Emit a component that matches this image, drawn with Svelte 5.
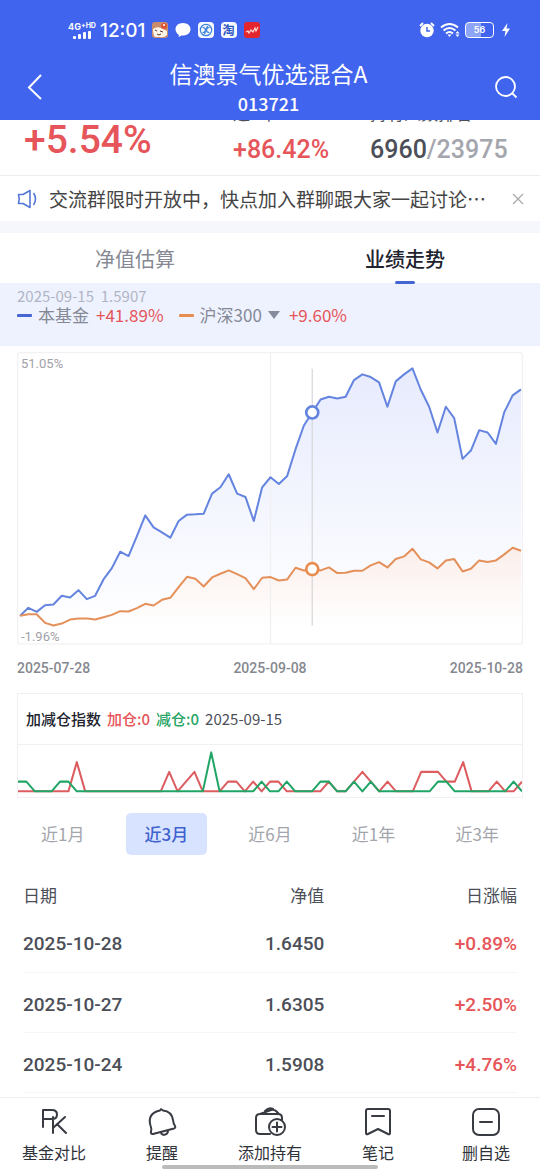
<script>
    const fundLine = [
        827, 803, 815, 795, 793, 767, 772, 750, 777, 767, 718, 684, 635, 648, 588, 526, 562, 577, 593, 543,
        524, 523, 521, 461, 442, 403, 461, 471, 543, 442, 412, 432, 408, 328, 257, 218, 179, 171, 176, 171,
        121, 104, 112, 128, 201, 125, 104, 86, 150, 201, 278, 201, 235, 357, 332, 271, 278, 312, 217, 167, 149
    ];
    const indexLine = [
        827, 822, 822, 848, 856, 850, 838, 835, 835, 838, 831, 824, 813, 814, 804, 791, 796, 779, 773, 741,
        710, 716, 739, 712, 701, 691, 702, 714, 747, 713, 711, 721, 718, 683, 691, 687, 691, 682, 699, 698,
        692, 692, 676, 666, 682, 657, 649, 626, 658, 667, 685, 661, 657, 694, 686, 661, 666, 661, 643, 623, 632
    ];
    const selected = 35;

    const buyLevels = [
        0, 0, 0, 0, 0, 0, 0, 3, 0, 0, 0, 0, 0, 0, 0, 0, 0, 0, 2, 0, 1, 2, 0, 0, 0, 1, 1, 0, 1, 0, 1,
        1, 0, 0, 0, 0, 0, 1, 0, 0, 1, 2, 1, 0, 1, 0, 0, 0, 2, 2, 2, 1, 1, 3, 0, 0, 0, 1, 0, 0, 1
    ];
    const sellLevels = [
        1, 1, 0, 0, 0, 1, 1, 0, 0, 0, 0, 0, 0, 0, 0, 0, 0, 0, 0, 0, 0, 0, 0, 4, 0, 0, 0, 0, 0, 1, 0,
        0, 1, 0, 0, 0, 1, 1, 0, 0, 1, 0, 1, 0, 0, 0, 0, 0, 0, 0, 1, 1, 0, 0, 0, 0, 0, 0, 0, 1, 0
    ];

    const px = (i) => 9 + i * 25;
    const py = (v) => v - 37;
    const points = (line) => line.map((v, i) => `${px(i)},${py(v)}`).join(' ');
    const area = (line) => `${px(0)},819 ${points(line)} ${px(60)},819`;
    const levels = (list) => list.map((v, i) => `${i * 25},${138 - v * 29}`).join(' ');

    const periods = ['近1月', '近3月', '近6月', '近1年', '近3年'];
    let period = '近3月';

    const rows = [
        { date: '2025-10-28', value: '1.6450', change: '+0.89%' },
        { date: '2025-10-27', value: '1.6305', change: '+2.50%' },
        { date: '2025-10-24', value: '1.5908', change: '+4.76%' }
    ];
</script>

<div class="page">
    <header>
        <div class="status">
            <div class="network">
                <span class="net">4G<small>+HD</small></span>
                <svg width="18" height="8" viewBox="0 0 18 8" fill="#fff">
                    <rect x="0" y="5" width="3" height="3" rx="1" /><rect x="5" y="3" width="3" height="5" rx="1" />
                    <rect x="10" y="1" width="3" height="7" rx="1" /><rect x="15" y="0" width="3" height="8" rx="1" />
                </svg>
            </div>
            <span class="time">12:01</span>
            <div class="apps">
                <svg width="16" height="16" viewBox="0 0 16 16">
                    <rect width="16" height="16" rx="3" fill="#c98d6c" />
                    <path d="M1 7Q5 4 9 6L15 9V13Q12 16 8 15H3Q1 13 1 7Z" fill="#fff5e8" />
                    <path d="M3 8l2 1M8 9l3 1M5 12q2 2 4 0" stroke="#593326" fill="none" />
                    <circle cx="12" cy="4" r="3" fill="#df5433" /><circle cx="12" cy="3" r="1" fill="#fff" />
                </svg>
                <svg width="16" height="16" viewBox="0 0 16 16"><path d="M8 1C3.500 1 .5 3.800 .5 7.300c0 2.600 1.500 4.500 3.500 5.600L3.500 15l3-1.500C12 14 15.500 11 15.500 7.300 15.500 3.800 12.500 1 8 1Z" fill="#fff" /></svg>
                <svg width="16" height="16" viewBox="0 0 16 16">
                    <rect width="16" height="16" rx="4" fill="#f5f9ff" />
                    <g fill="none" stroke="#3c83d9" stroke-width="1.200"><circle cx="8" cy="8" r="5.700" /><path d="M4.500 5.500q3 0 3 2.500t-3 2.500M11.500 5.500q-3 0-3 2.500t3 2.500M9.500 4l-3 8" /></g>
                </svg>
                <span class="tao">淘</span>
                <svg width="16" height="16" viewBox="0 0 16 16">
                    <rect width="16" height="16" rx="3" fill="#e3262d" />
                    <path d="M2 10l2-1 1 2 2-3 2 2 2-4 1 3 2-4" fill="none" stroke="#ffd9d6" stroke-width="1.200" />
                </svg>
            </div>
            <div class="system">
                <svg width="16" height="16" viewBox="0 0 16 16">
                    <circle cx="8" cy="8.500" r="6.700" fill="#fff" />
                    <path d="M1 4l3-3M15 4l-3-3" stroke="#fff" stroke-width="1.800" />
                    <path d="M8 5v4h3" fill="none" stroke="#4064ee" stroke-width="1.500" />
                </svg>
                <svg width="20" height="16" viewBox="0 0 20 16">
                    <g fill="none" stroke="#fff" stroke-width="2"><path d="M1 5.500Q9.500-1.500 18 5.500M3.500 8.500Q9.500 3.500 15.500 8.500M6 11.500Q9.500 8.500 13 11.500" /></g>
                    <path d="M7.500 12.500h4l-2 2.500zM15.500 11.500l2-2.500 2 2.500zM15.500 12.500l2 2.500 2-2.500z" fill="#fff" />
                </svg>
                <span class="battery">56</span>
                <svg width="8" height="14" viewBox="0 0 8 14"><path d="M5.500 0L0 8h3.500L2.500 14 8 5.500H4.500z" fill="#fff" /></svg>
            </div>
        </div>
        <div class="titlebar">
            <button aria-label="返回">
                <svg width="16" height="28" viewBox="0 0 16 28"><path d="M14 2L2 14.500 14 26" fill="none" stroke="#fff" stroke-width="2" /></svg>
            </button>
            <div class="title">
                <h1>信澳景气优选混合A</h1>
                <p>013721</p>
            </div>
            <button aria-label="搜索">
                <svg width="24" height="24" viewBox="0 0 24 24"><g fill="none" stroke="#fff" stroke-width="1.800"><circle cx="11.500" cy="11.500" r="9.500" /><path d="M18 18l4.500 4.500" /></g></svg>
            </button>
        </div>
    </header>

    <section class="summary">
        <strong class="day red">+5.54%</strong>
        <div class="year"><span>近1年</span><strong class="red">+86.42%</strong></div>
        <div class="rank"><span>持有人数排名</span><strong>6960<i>/23975</i></strong></div>
    </section>

    <div class="notice">
        <svg width="21" height="20" viewBox="0 0 21 20" fill="none" stroke="#5577d8" stroke-width="1.600">
            <path d="M1.500 5.500H6L13 1.500v17L6 14.500H1.500q1.500-4.500 0-9Z" stroke-linejoin="round" /><path d="M16.500 4q4 6 0 12" />
        </svg>
        <p>交流群限时开放中，快点加入群聊跟大家一起讨论…</p>
        <button aria-label="关闭"><svg width="12" height="12" viewBox="0 0 12 12"><path d="M1 1l10 10M11 1L1 11" stroke="#aaa" stroke-width="1.300" /></svg></button>
    </div>

    <div class="tabs">
        <button>净值估算</button>
        <button class="active">业绩走势</button>
    </div>

    <div class="legend">
        <p class="picked">2025-09-15&nbsp; 1.5907</p>
        <div class="series">
            <i class="dash blue"></i><span>本基金</span><b class="red">+41.89%</b>
            <i class="dash orange"></i>
            <button>沪深300 <svg width="12" height="8" viewBox="0 0 12 8"><path d="M0 0h12L6 8z" fill="#858b9b" /></svg></button>
            <b class="red">+9.60%</b>
        </div>
    </div>

    <div class="trend">
        <svg viewBox="0 0 1515 876">
            <defs>
                <linearGradient id="blueFill" gradientUnits="userSpaceOnUse" x1="0" y1="49" x2="0" y2="819">
                    <stop offset="0" stop-color="#e7ebfd" /><stop offset="1" stop-color="#fff" />
                </linearGradient>
                <linearGradient id="orangeFill" gradientUnits="userSpaceOnUse" x1="0" y1="586" x2="0" y2="819">
                    <stop offset="0" stop-color="#fbeeea" /><stop offset="1" stop-color="#fff" />
                </linearGradient>
            </defs>
            <polygon points={area(fundLine)} fill="url(#blueFill)" />
            <polygon points={area(indexLine)} fill="url(#orangeFill)" />
            <rect x="2" y="2" width="1511" height="872" rx="6" fill="none" stroke="#f2f2f4" stroke-width="4" />
            <path d="M759 2V874" stroke="#f0f0f3" stroke-width="4" />
            <path d="M{px(selected)} 50V819" stroke="#dadadd" stroke-width="4" />
            <polyline points={points(fundLine)} fill="none" stroke="#6484df" stroke-width="6" stroke-linejoin="round" />
            <polyline points={points(indexLine)} fill="none" stroke="#e4905b" stroke-width="6" stroke-linejoin="round" />
            <circle cx={px(selected)} cy={py(fundLine[selected])} r="18" fill="#fff" stroke="#6484df" stroke-width="8" />
            <circle cx={px(selected)} cy={py(indexLine[selected])} r="18" fill="#fff" stroke="#e98d4f" stroke-width="8" />
        </svg>
        <span class="max">51.05%</span>
        <span class="min">-1.96%</span>
    </div>
    <div class="dates"><span>2025-07-28</span><span>2025-09-08</span><span>2025-10-28</span></div>

    <div class="position">
        <p><b>加减仓指数</b><b class="red">加仓:0</b><b class="green">减仓:0</b><span>2025-09-15</span></p>
        <svg viewBox="0 0 1500 155">
            <g fill="none" stroke-width="6" stroke-linejoin="round">
                <polyline points={levels(buyLevels)} stroke="#dc5c60" />
                <polyline points={levels(sellLevels)} stroke="#21a566" />
            </g>
        </svg>
    </div>

    <div class="periods">
        {#each periods as item}
            <button class:active={item === period} on:click={() => (period = item)}>{item}</button>
        {/each}
    </div>

    <table>
        <thead>
            <tr><th>日期</th><th>净值</th><th>日涨幅</th></tr>
        </thead>
        <tbody>
            {#each rows as row}
                <tr><td>{row.date}</td><td>{row.value}</td><td class="red">{row.change}</td></tr>
            {/each}
        </tbody>
    </table>

    <nav>
        <button>
            <svg viewBox="0 0 32 32"><path d="M5 21V4h9q5 0 5 4.500T14 13H5M15 11v16M27 11L15 22M19 18l9 9" /></svg>
            基金对比
        </button>
        <button>
            <svg viewBox="0 0 32 32"><path d="M14 4.500l1-1.300 2 1.300C22 5 26 8 27 14c.3 3 1 4.500 2 6 .8 1.200 0 2.200-1 2.500L7 28c-1.500.3-2.500-.8-2-2 .8-2.500.5-4-.5-6.500C2 11 6 6 14 4.500ZM15 26.500c.5 3.500 7 3 7-2" /></svg>
            提醒
        </button>
        <button>
            <svg viewBox="0 0 32 32"><path d="M16 28H6q-4 0-4-4V12q0-4 4-4h18q4 0 4 4v2M6 8l11-4q3-1 5 1l3 3M11 5q4-4 8-2" /><circle cx="23" cy="21" r="8" fill="#fff" /><path d="M23 16.500v9M18.500 21h9" /></svg>
            添加持有
        </button>
        <button>
            <svg viewBox="0 0 32 32"><path d="M4 5q0-2 2-2h20q2 0 2 2v22q0 2-2 1l-10-5-10 5q-2 1-2-1ZM10 10h12" /></svg>
            笔记
        </button>
        <button>
            <svg viewBox="0 0 32 32"><rect x="3" y="3" width="26" height="26" rx="6" /><path d="M10 16h12" /></svg>
            删自选
        </button>
        <i class="home"></i>
    </nav>
</div>

<style>
    :global(body) {
        background: #fff;
    }

    .page {
        font-family: "Noto Sans CJK SC", sans-serif;
        color: #4c4f58;
    }

    h1, p {
        margin: 0;
        font-weight: 400;
    }

    i {
        font-style: normal;
    }

    svg {
        display: block;
        flex: none;
    }

    button {
        padding: 0;
        border: 0;
        background: none;
        color: inherit;
        font: inherit;
    }

    header {
        position: relative;
        z-index: 1;
        height: 120px;
        background: #4064ee;
        color: #fff;
    }

    .status {
        display: flex;
        align-items: center;
        height: 60px;
        padding: 0 30px 0 67px;
        font-family: Inter, sans-serif;
    }

    .network {
        display: flex;
        flex-direction: column;
        align-items: center;
        width: 30px;
    }

    .net {
        display: flex;
        font-size: 9px;
        font-weight: 700;
        line-height: 9px;
        white-space: nowrap;
    }

    .net small {
        font-size: 7px;
        line-height: 7px;
    }

    .time {
        margin-left: 3px;
        font-size: 19px;
        font-weight: 500;
    }

    .apps {
        display: flex;
        gap: 7px;
        margin-left: 6px;
    }

    .tao {
        width: 16px;
        height: 16px;
        border-radius: 4px;
        background: #f5f9ff;
        color: #2954c0;
        font: 700 12px/16px "Noto Sans CJK SC", sans-serif;
        text-align: center;
    }

    .system {
        display: flex;
        align-items: center;
        gap: 5px;
        margin-left: auto;
    }

    .battery {
        box-sizing: border-box;
        width: 29px;
        height: 16px;
        margin-right: 3px;
        border: 1px solid #fff;
        border-radius: 4px;
        background: linear-gradient(90deg, #8ea4f5 56%, transparent 56%);
        font-size: 9px;
        font-weight: 600;
        line-height: 14px;
        text-align: center;
    }

    .titlebar {
        display: flex;
        align-items: center;
        justify-content: space-between;
        height: 54px;
        padding: 0 22px 0 27px;
    }

    .title {
        text-align: center;
    }

    .title h1 {
        font-size: 23px;
        line-height: 32px;
    }

    .title p {
        font-size: 18px;
        font-weight: 500;
        line-height: 28px;
    }

    .red {
        color: #e65559;
    }

    .green {
        color: #27a566;
    }

    .summary {
        display: flex;
        align-items: flex-end;
        height: 75px;
        margin-top: -20px;
        padding: 0 24px;
        border-bottom: 1px solid #ececef;
    }

    .summary strong {
        font-family: Roboto, sans-serif;
        font-size: 25px;
        font-weight: 500;
        line-height: 50px;
    }

    .summary .day {
        flex: 209;
        font-size: 39px;
        line-height: 70px;
    }

    .year, .rank {
        display: flex;
        flex-direction: column;
        flex: 137;
        font-size: 17px;
        line-height: 24px;
    }

    .rank {
        flex: 146;
    }

    .rank span {
        white-space: nowrap;
    }

    .rank i {
        color: #a5a6ad;
    }

    .notice {
        display: flex;
        align-items: center;
        height: 45px;
        padding: 0 16px 0 17px;
        border-bottom: 12px solid #f5f7fc;
    }

    .notice p {
        flex: 1;
        margin: 0 11px;
        overflow: hidden;
        color: #444;
        font-size: 19px;
        line-height: 28px;
        white-space: nowrap;
    }

    .tabs {
        display: flex;
        height: 50px;
    }

    .tabs button {
        position: relative;
        flex: 1;
        color: #868993;
        font-size: 20px;
    }

    .tabs .active {
        color: #20232d;
        font-weight: 500;
    }

    .tabs .active::after {
        position: absolute;
        bottom: -1px;
        left: calc(50% - 10px);
        width: 20px;
        height: 3px;
        border-radius: 2px;
        background: #4466d4;
        content: "";
    }

    .legend {
        height: 59px;
        padding: 4px 17px 0;
        background: #eef2ff;
        color: #858995;
        font-size: 17px;
    }

    .picked {
        color: #b1b5c5;
        font-size: 15px;
        line-height: 18px;
    }

    .series {
        display: flex;
        align-items: center;
        line-height: 20px;
    }

    .series b {
        margin-left: 7px;
        font-weight: 400;
    }

    .series button {
        display: flex;
        align-items: center;
        gap: 6px;
        margin-right: 2px;
    }

    .dash {
        width: 15px;
        height: 3px;
        margin-right: 6px;
        border-radius: 1px;
    }

    .dash.blue {
        background: #4466d4;
    }

    .dash.orange {
        margin-left: 15px;
        background: #e98d4f;
    }

    .trend {
        position: relative;
        margin: 6px 17px 0;
    }

    .trend svg, .position svg {
        width: 100%;
    }

    .trend span {
        position: absolute;
        left: 4px;
        color: #9fa1a8;
        font: 13px/16px Roboto, sans-serif;
    }

    .trend .max {
        top: 4px;
    }

    .trend .min {
        bottom: 0;
    }

    .dates {
        display: flex;
        justify-content: space-between;
        padding: 12px 17px 14px;
        color: #85888f;
        font: 500 14px/22px Roboto, sans-serif;
    }

    .position {
        margin: 0 17px;
        border: 1px solid #f0f0f2;
    }

    .position p {
        display: flex;
        gap: 6px;
        padding: 0 8px;
        border-bottom: 1px solid #f0f0f2;
        font-size: 15px;
        line-height: 50px;
    }

    .position b {
        font-weight: 500;
    }

    .position b:first-child {
        color: #20232d;
    }

    .periods {
        display: flex;
        padding: 15px 11px 0;
    }

    .periods button {
        flex: 1;
        height: 42px;
        margin: 0 11px;
        border-radius: 5px;
        color: #a3a5ac;
        font-size: 17px;
    }

    .periods .active {
        background: #d8e3ff;
        color: #4062cf;
        font-weight: 500;
    }

    table {
        width: calc(100% - 46px);
        margin: 22px 23px 4px;
        border-collapse: collapse;
        table-layout: fixed;
    }

    th, td {
        box-sizing: border-box;
        padding: 0;
        text-align: right;
    }

    th {
        height: 36px;
        font-size: 17px;
        font-weight: 400;
    }

    td {
        height: 60px;
        padding-top: 4px;
        border-bottom: 1px solid #f5f5f7;
        font: 500 19px/24px Roboto, sans-serif;
    }

    th:first-child, td:first-child {
        width: 40%;
        text-align: left;
    }

    th:nth-child(2) {
        width: 21%;
    }

    nav {
        position: relative;
        display: flex;
        height: 72px;
        border-top: 1px solid #eceef4;
        background: #fff;
        color: #30323a;
    }

    nav button {
        display: flex;
        flex: 1;
        flex-direction: column;
        align-items: center;
        padding-top: 8px;
        font-size: 16px;
        line-height: 28px;
    }

    nav svg {
        width: 32px;
        height: 32px;
        fill: none;
        stroke: #393b43;
        stroke-width: 2;
        stroke-linecap: round;
        stroke-linejoin: round;
    }

    .home {
        position: absolute;
        bottom: 1px;
        left: 30%;
        width: 40%;
        height: 4px;
        border-radius: 2px;
        background: #bbb;
    }
</style>
